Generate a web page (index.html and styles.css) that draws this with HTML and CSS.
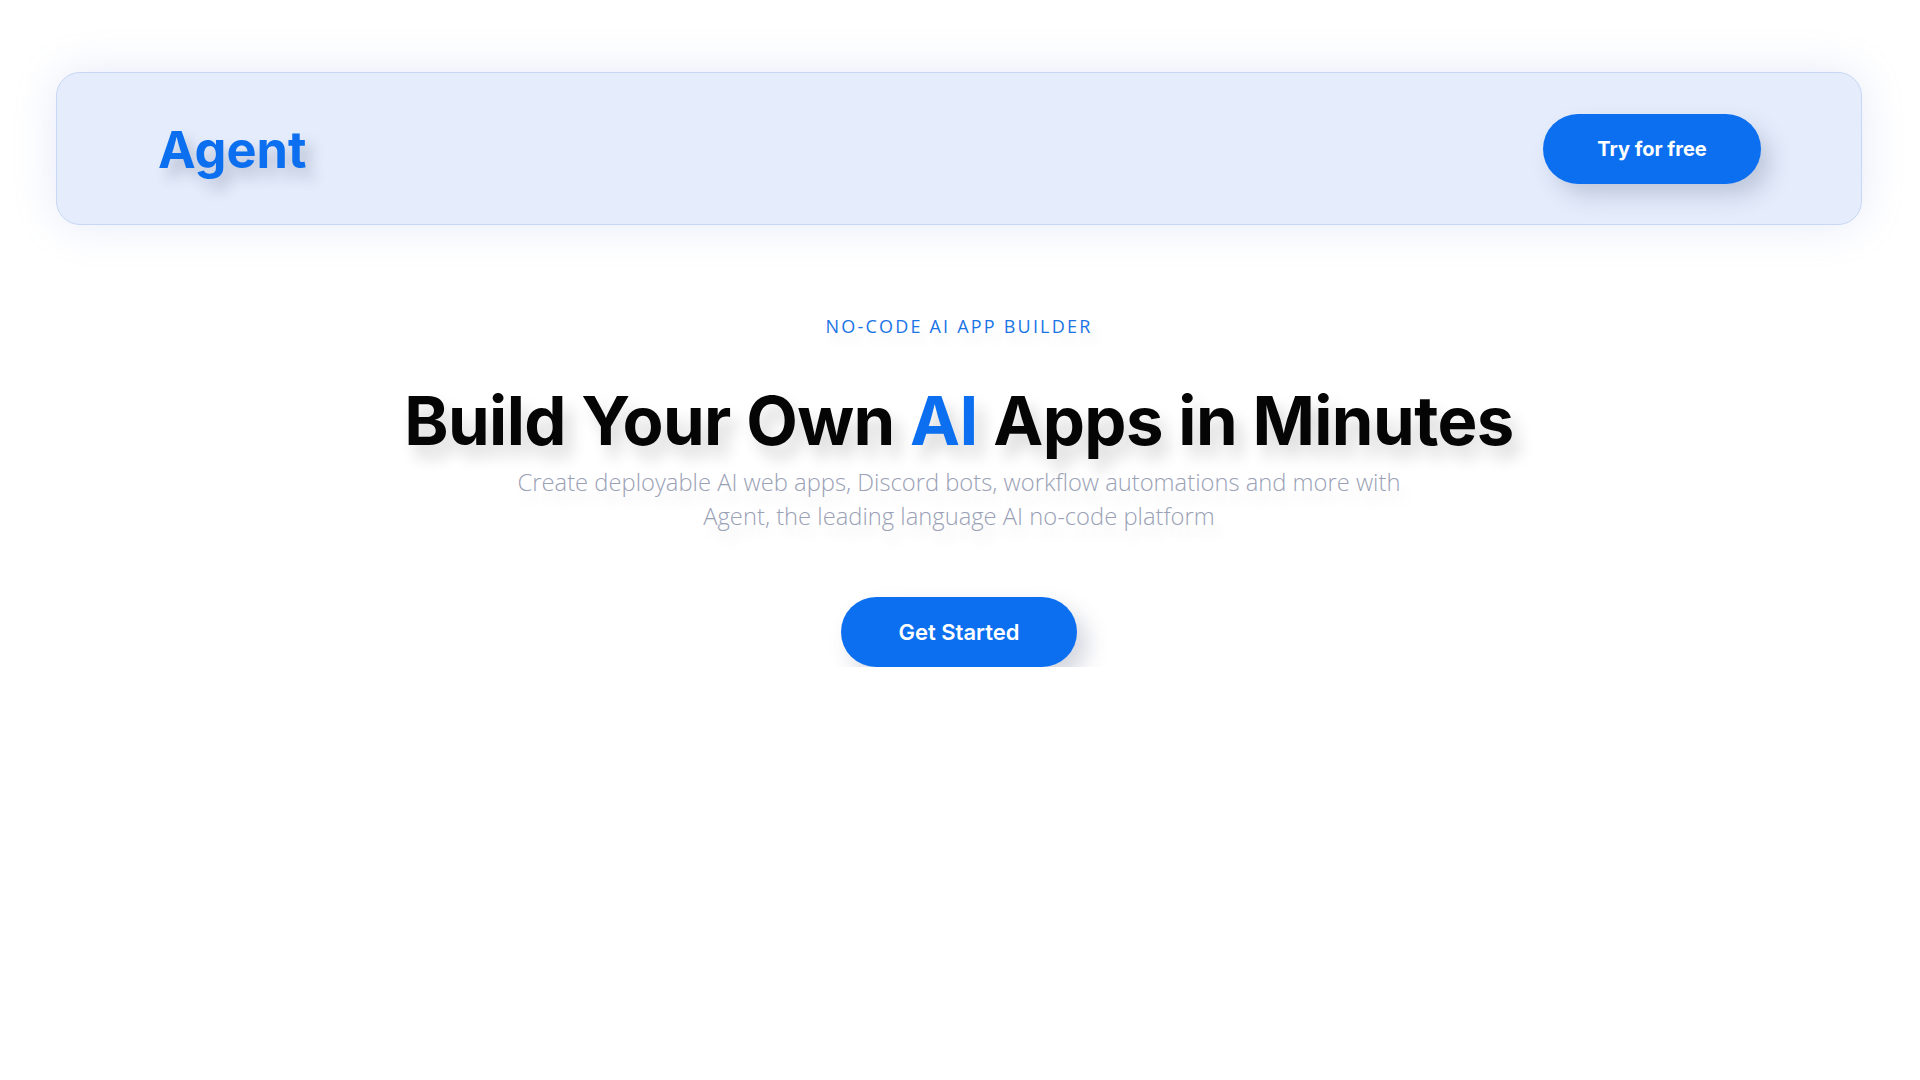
FILE: index.html
```html
<!DOCTYPE html>
<html lang="en">
<head>
<meta charset="utf-8">
<title>Agent</title>
<link rel="stylesheet" href="styles.css">
</head>
<body>
<div class="page">
  <header class="nav">
    <div class="logo">Agent</div>
    <a class="btn btn-nav" href="#">Try for free</a>
  </header>
  <main class="hero">
    <p class="eyebrow">NO-CODE AI APP BUILDER</p>
    <h1 class="title">Build Your Own <span class="accent">AI</span> Apps in Minutes</h1>
    <p class="subtitle">Create deployable AI web apps, Discord bots, workflow automations and more with<br>Agent, the leading language AI no-code platform</p>
    <a class="btn btn-hero" href="#">Get Started</a>
  </main>
</div>
</body>
</html>
```

FILE: styles.css
```css
* { box-sizing: border-box; }
html, body { margin: 0; padding: 0; background: #ffffff; }
body { font-family: Inter, "Noto Sans", sans-serif; color: #000; }

.page {
  padding: 72px 58px 0 56px;
}

.nav {
  height: 153px;
  display: flex;
  align-items: center;
  justify-content: space-between;
  padding: 0 100px 0 101px;
  background: #e5edfc;
  border: 1px solid #c7d7f4;
  border-radius: 24px;
  box-shadow: 0 0 44px rgba(120, 150, 220, 0.2);
}

.logo {
  font-family: Inter, sans-serif;
  font-weight: 700;
  font-size: 50.5px;
  color: #0b6ff0;
  text-shadow: 8px 10px 14px rgba(60, 70, 100, 0.28);
  margin-top: 2px;
}

.btn {
  display: inline-flex;
  align-items: center;
  justify-content: center;
  background: #0b6ff0;
  color: #ffffff;
  text-decoration: none;
  font-family: Inter, sans-serif;
  font-weight: 600;
  border-radius: 999px;
  box-shadow: 10px 12px 22px rgba(60, 70, 110, 0.22);
}

.btn-nav {
  width: 218px;
  height: 70px;
  font-size: 20px;
  font-weight: 700;
}

.hero {
  display: flex;
  flex-direction: column;
  align-items: center;
  text-align: center;
}

.eyebrow {
  margin: 89px 0 0;
  font-family: "Open Sans", sans-serif;
  font-weight: 400;
  font-size: 18px;
  letter-spacing: 2.2px;
  color: #1a74e6;
  text-shadow: 6px 10px 12px rgba(0, 0, 0, 0.08);
}

.title {
  margin: 46px 0 0;
  font-family: Inter, sans-serif;
  font-weight: 700;
  font-size: 67px;
  line-height: 1.1;
  letter-spacing: -0.55px;
  color: #050505;
  text-shadow: 8px 12px 16px rgba(0, 0, 0, 0.16);
}

.accent { color: #0b6ff0; }

.subtitle {
  margin: 7px 0 0;
  font-family: "Open Sans", sans-serif;
  font-weight: 300;
  font-size: 23.75px;
  line-height: 34px;
  color: #9aa1b6;
  text-shadow: 6px 12px 14px rgba(0, 0, 0, 0.10);
}

.btn-hero {
  margin-top: 64px;
  width: 236px;
  height: 70px;
  font-size: 22px;
}
```
